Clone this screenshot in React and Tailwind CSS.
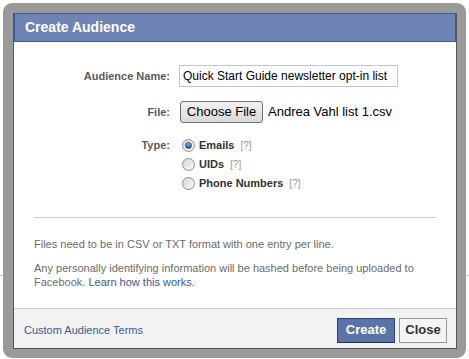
const Radio = ({ checked }) => (
    <span className="relative flex h-[13px] w-[13px] shrink-0 items-center justify-center rounded-full border border-[#8f8f8f] bg-gradient-to-br from-[#d4d4d4] to-[#fbfbfb]">
        {checked && (
            <span className="h-[7px] w-[7px] rounded-full border border-[#1d4f7c] bg-gradient-to-b from-[#6fbde9] to-[#1c5d95]" />
        )}
    </span>
);

const TypeOption = ({ label, checked }) => (
    <div className="flex h-[19px] items-center gap-[4px]">
        <Radio checked={checked} />
        <span className="font-bold text-[#333]">{label}</span>
        <span className="ml-[2px] text-[10px] text-[#999]">[?]</span>
    </div>
);

const App = () => {
    return (
        <div className="relative h-[359px] w-[469px] overflow-hidden bg-white font-['Liberation_Sans',Arial,sans-serif] text-[11px]">
            {/* page content behind the dialog */}
            <div className="absolute left-0 right-0 top-[275px] h-px bg-[#c8c8c8]" />

            <div className="relative m-[3px] w-[463px] rounded-[9px] bg-[#9a9a9a] pt-[10px] pl-[10px] pr-[9px] pb-[9px]">
                <div className="border-x border-b border-[#555] bg-white">
                    <div className="flex h-[29px] items-center border border-[#3b5998] bg-[#6d84b4] px-[10px] text-[14px] font-bold text-white">
                        Create Audience
                    </div>

                    <div className="px-[20px] pt-[23px] pb-[19px]">
                        <div className="flex h-[22px] items-center gap-[9px]">
                            <label className="w-[136px] text-right font-bold text-[#5a5a5a]">Audience Name:</label>
                            <div className="flex h-[22px] w-[219px] items-center border border-[#bdc7d8] px-[3px] text-[12px] text-[#000]">
                                Quick Start Guide newsletter opt-in list
                            </div>
                        </div>

                        <div className="mt-[14px] flex h-[22px] items-center gap-[9px]">
                            <label className="w-[136px] text-right font-bold text-[#5a5a5a]">File:</label>
                            <div className="flex items-center gap-[5px] text-[13px] text-[#000]">
                                <button className="ml-px h-[22px] w-[83px] rounded-[3px] border border-[#707070] bg-gradient-to-b from-[#f2f2f2] to-[#d9d9d9] text-[13px] text-[#000]">
                                    Choose File
                                </button>
                                <span>Andrea Vahl list 1.csv</span>
                            </div>
                        </div>

                        <div className="mt-[13px] flex gap-[9px]">
                            <label className="flex h-[19px] w-[136px] items-center justify-end font-bold text-[#5a5a5a]">Type:</label>
                            <div className="flex flex-col pl-[3px]">
                                <TypeOption label="Emails" checked />
                                <TypeOption label="UIDs" />
                                <TypeOption label="Phone Numbers" />
                            </div>
                        </div>

                        <div className="mt-[24px] h-px bg-[#ccc]" />

                        <p className="mt-[19px] leading-[14px] text-[#6b6b6b]">
                            Files need to be in CSV or TXT format with one entry per line.
                        </p>
                        <p className="mt-[10px] leading-[14px] text-[#6b6b6b]">
                            Any personally identifying information will be hashed before being uploaded to
                            <br />
                            Facebook. <a className="text-[#3b5998]">Learn how this works.</a>
                        </p>
                    </div>

                    <div className="flex h-[40px] items-center justify-between border-t border-[#ccc] bg-[#f2f2f2] pt-[3px] pl-[10px] pr-[9px]">
                        <a className="text-[#3b5998]">Custom Audience Terms</a>
                        <div className="flex gap-[4px]">
                            <button className="h-[25px] w-[58px] border border-[#29447e] border-b-[#1a356e] bg-[#5b74a8] text-[13px] font-bold text-white">
                                Create
                            </button>
                            <button className="h-[25px] w-[48px] border border-[#999] bg-[#f4f4f4] text-[13px] font-bold text-[#333]">
                                Close
                            </button>
                        </div>
                    </div>
                </div>
            </div>
        </div>
    );
};

export default App;
